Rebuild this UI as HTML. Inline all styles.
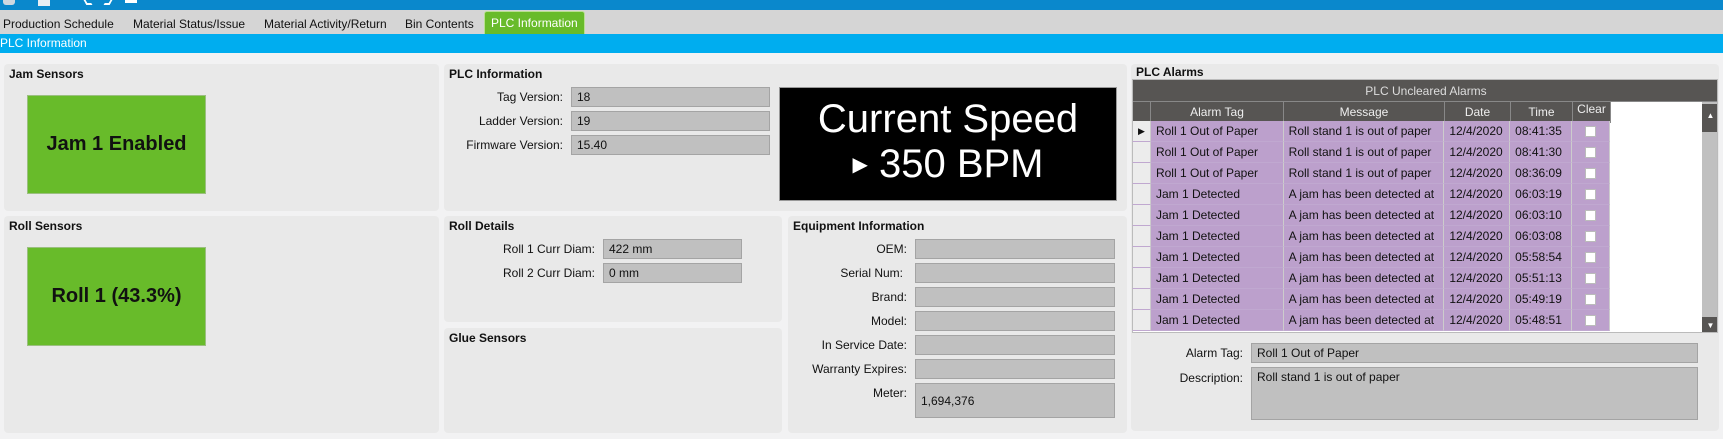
<!DOCTYPE html>
<html><head><meta charset="utf-8">
<style>
*{margin:0;padding:0;box-sizing:border-box}
body{width:1723px;height:439px;background:#f2f2f3;font-family:"Liberation Sans",Arial,sans-serif;font-size:12px;color:#111;position:relative;overflow:hidden}
.a{position:absolute}
.top{left:0;top:0;width:1723px;height:10px;background:#0a88cc}
.tabs{left:0;top:10px;width:1723px;height:24px;background:#d5d5d5}
.tab{position:absolute;top:17px;font-size:12px;color:#111;white-space:nowrap}
.band{left:0;top:34px;width:1723px;height:19px;background:#00adef;color:#fff;font-size:12px;line-height:19px;padding-left:0}
.p{position:absolute;background:#e9e9e9;border-radius:4px}
.pt{position:absolute;left:5px;top:3px;font-weight:bold;font-size:12px}
.green{position:absolute;background:#68bb2a;border:1px solid #9bbf80;display:flex;align-items:center;justify-content:center;font-size:20px;font-weight:bold;color:#111}
.lbl{position:absolute;text-align:right;font-size:12px;line-height:20px}
.in{position:absolute;background:#c0c0c0;border:1px solid #a4a4a4;font-size:12px;line-height:18px;padding-left:5px}
.grid{position:absolute;left:1132px;top:79px;width:586px;height:254px;background:#fff;overflow:hidden;border:1px solid #bbb}
.row{position:absolute;left:0;height:21px;display:flex}
.row div{height:21px;line-height:20px;border-right:1px solid #ccc;border-bottom:1px solid #c9b6d6;white-space:nowrap;overflow:hidden}
.cb{display:inline-block;width:11px;height:11px;background:#fff;border:1px solid #bbb;vertical-align:middle}
.r{display:flex;height:21px;line-height:20px}.r div{border-right:1px solid #ccc;border-bottom:1px solid #c0a8d0;background:#bca0cc;white-space:nowrap;overflow:hidden;padding-left:5px}.r div:first-child{background:#ececec;width:19px;padding:0;border-left:1px solid #bbb}
</style></head><body>
<div class="a top"></div>
<div class="a" style="left:3px;top:0;width:12px;height:5px;background:#cfd8e0;border-radius:0 0 3px 3px"></div>
<div class="a" style="left:38px;top:0;width:12px;height:6px;background:#e8eef3"></div>
<div class="a" style="left:85px;top:0;width:6px;height:5px;border-left:2px solid #fff;border-bottom:2px solid #fff;transform:skewX(30deg)"></div>
<div class="a" style="left:105px;top:0;width:6px;height:5px;border-right:2px solid #fff;border-bottom:2px solid #fff;transform:skewX(-30deg)"></div>
<div class="a" style="left:125px;top:0;width:12px;height:3px;background:#fff"></div>
<div class="a tabs"></div>
<div class="tab" style="left:3px">Production Schedule</div>
<div class="tab" style="left:133px">Material Status/Issue</div>
<div class="tab" style="left:264px">Material Activity/Return</div>
<div class="tab" style="left:405px">Bin Contents</div>
<div class="a" style="left:484px;top:11px;width:101px;height:23px;background:#68bb2a;border:1px solid #b8e090;border-bottom:none;border-radius:3px 3px 0 0;color:#fff;font-size:12px;padding:4px 0 0 6px;white-space:nowrap">PLC Information</div>
<div class="a band">PLC Information</div>

<div class="p" style="left:4px;top:64px;width:435px;height:147px"><div class="pt">Jam Sensors</div></div>
<div class="green" style="left:27px;top:95px;width:179px;height:99px">Jam 1 Enabled</div>
<div class="p" style="left:4px;top:216px;width:435px;height:217px"><div class="pt">Roll Sensors</div></div>
<div class="green" style="left:27px;top:247px;width:179px;height:99px">Roll 1 (43.3%)</div>

<div class="p" style="left:444px;top:64px;width:683px;height:147px"><div class="pt">PLC Information</div></div>
<div class="lbl" style="left:444px;width:119px;top:87px">Tag Version:</div>
<div class="lbl" style="left:444px;width:119px;top:111px">Ladder Version:</div>
<div class="lbl" style="left:444px;width:119px;top:135px">Firmware Version:</div>
<div class="in" style="left:571px;top:87px;width:199px;height:20px">18</div>
<div class="in" style="left:571px;top:111px;width:199px;height:20px">19</div>
<div class="in" style="left:571px;top:135px;width:199px;height:20px">15.40</div>
<div class="a" style="left:779px;top:87px;width:338px;height:114px;background:#000;border:1px solid #999;color:#fff;text-align:center;font-size:40px;line-height:45px;padding-top:9px">Current Speed<br><span style="font-size:20px;vertical-align:6px">&#9654;</span> 350 BPM</div>

<div class="p" style="left:444px;top:216px;width:338px;height:106px"><div class="pt">Roll Details</div></div>
<div class="lbl" style="left:444px;width:151px;top:239px">Roll 1 Curr Diam:</div>
<div class="lbl" style="left:444px;width:151px;top:263px">Roll 2 Curr Diam:</div>
<div class="in" style="left:603px;top:239px;width:139px;height:20px">422 mm</div>
<div class="in" style="left:603px;top:263px;width:139px;height:20px">0 mm</div>
<div class="p" style="left:444px;top:328px;width:338px;height:105px"><div class="pt">Glue Sensors</div></div>

<div class="p" style="left:788px;top:216px;width:339px;height:217px"><div class="pt">Equipment Information</div></div>
<div class="lbl" style="left:788px;width:119px;top:239px">OEM:</div>
<div class="lbl" style="left:788px;width:115px;top:263px">Serial Num:</div>
<div class="lbl" style="left:788px;width:119px;top:287px">Brand:</div>
<div class="lbl" style="left:788px;width:119px;top:311px">Model:</div>
<div class="lbl" style="left:788px;width:119px;top:335px">In Service Date:</div>
<div class="lbl" style="left:788px;width:119px;top:359px">Warranty Expires:</div>
<div class="lbl" style="left:788px;width:119px;top:383px">Meter:</div>
<div class="in" style="left:915px;top:239px;width:200px;height:20px"></div>
<div class="in" style="left:915px;top:263px;width:200px;height:20px"></div>
<div class="in" style="left:915px;top:287px;width:200px;height:20px"></div>
<div class="in" style="left:915px;top:311px;width:200px;height:20px"></div>
<div class="in" style="left:915px;top:335px;width:200px;height:20px"></div>
<div class="in" style="left:915px;top:359px;width:200px;height:20px"></div>
<div class="in" style="left:915px;top:383px;width:200px;height:35px;padding-top:8px">1,694,376</div>

<div class="p" style="left:1131px;top:64px;width:588px;height:367px"><div class="pt" style="top:1px">PLC Alarms</div></div>
<div class="grid">
 <div class="a" style="left:0;top:0;width:586px;height:22px;background:#575553;color:#ddd;text-align:center;line-height:22px;border-bottom:1px solid #888">PLC Uncleared Alarms</div>
 <div class="row" style="top:22px;background:#575553;color:#eee;height:20px">
  <div style="width:18px;border-color:#888"></div>
  <div style="width:133px;text-align:center;border-color:#888">Alarm Tag</div>
  <div style="width:161px;text-align:center;border-color:#888">Message</div>
  <div style="width:66px;text-align:center;border-color:#888">Date</div>
  <div style="width:62px;text-align:center;border-color:#888">Time</div>
  <div style="width:38px;text-align:center;border-color:#888;line-height:14px">Clear</div>
 </div>
 <div class="a" style="left:569px;top:22px;width:17px;height:232px;background:#c0c0c0"></div>
 <div class="a" style="left:569px;top:24px;width:17px;height:28px;background:#575553;color:#fff;font-size:8px;text-align:center;line-height:24px">&#9650;</div>
 <div class="a" style="left:569px;top:237px;width:17px;height:17px;background:#575553;color:#fff;font-size:8px;text-align:center;line-height:17px">&#9660;</div>
</div>
<div class="lbl" style="left:1131px;width:112px;top:343px">Alarm Tag:</div>
<div class="lbl" style="left:1131px;width:112px;top:368px">Description:</div>
<div class="in" style="left:1251px;top:343px;width:447px;height:20px">Roll 1 Out of Paper</div>
<div class="in" style="left:1251px;top:367px;width:447px;height:53px">Roll stand 1 is out of paper</div>

<div class="a" style="left:1132px;top:121px;width:478px">
<div class="r"><div style="font-size:9px;text-align:center">&#9654;</div><div style="width:133px">Roll 1 Out of Paper</div><div style="width:161px">Roll stand 1 is out of paper</div><div style="width:66px">12/4/2020</div><div style="width:62px">08:41:35</div><div style="width:38px;padding-left:13px"><span class="cb"></span></div></div>
<div class="r"><div></div><div style="width:133px">Roll 1 Out of Paper</div><div style="width:161px">Roll stand 1 is out of paper</div><div style="width:66px">12/4/2020</div><div style="width:62px">08:41:30</div><div style="width:38px;padding-left:13px"><span class="cb"></span></div></div>
<div class="r"><div></div><div style="width:133px">Roll 1 Out of Paper</div><div style="width:161px">Roll stand 1 is out of paper</div><div style="width:66px">12/4/2020</div><div style="width:62px">08:36:09</div><div style="width:38px;padding-left:13px"><span class="cb"></span></div></div>
<div class="r"><div></div><div style="width:133px">Jam 1 Detected</div><div style="width:161px">A jam has been detected at</div><div style="width:66px">12/4/2020</div><div style="width:62px">06:03:19</div><div style="width:38px;padding-left:13px"><span class="cb"></span></div></div>
<div class="r"><div></div><div style="width:133px">Jam 1 Detected</div><div style="width:161px">A jam has been detected at</div><div style="width:66px">12/4/2020</div><div style="width:62px">06:03:10</div><div style="width:38px;padding-left:13px"><span class="cb"></span></div></div>
<div class="r"><div></div><div style="width:133px">Jam 1 Detected</div><div style="width:161px">A jam has been detected at</div><div style="width:66px">12/4/2020</div><div style="width:62px">06:03:08</div><div style="width:38px;padding-left:13px"><span class="cb"></span></div></div>
<div class="r"><div></div><div style="width:133px">Jam 1 Detected</div><div style="width:161px">A jam has been detected at</div><div style="width:66px">12/4/2020</div><div style="width:62px">05:58:54</div><div style="width:38px;padding-left:13px"><span class="cb"></span></div></div>
<div class="r"><div></div><div style="width:133px">Jam 1 Detected</div><div style="width:161px">A jam has been detected at</div><div style="width:66px">12/4/2020</div><div style="width:62px">05:51:13</div><div style="width:38px;padding-left:13px"><span class="cb"></span></div></div>
<div class="r"><div></div><div style="width:133px">Jam 1 Detected</div><div style="width:161px">A jam has been detected at</div><div style="width:66px">12/4/2020</div><div style="width:62px">05:49:19</div><div style="width:38px;padding-left:13px"><span class="cb"></span></div></div>
<div class="r"><div></div><div style="width:133px">Jam 1 Detected</div><div style="width:161px">A jam has been detected at</div><div style="width:66px">12/4/2020</div><div style="width:62px">05:48:51</div><div style="width:38px;padding-left:13px"><span class="cb"></span></div></div>
</div>
</body></html>
